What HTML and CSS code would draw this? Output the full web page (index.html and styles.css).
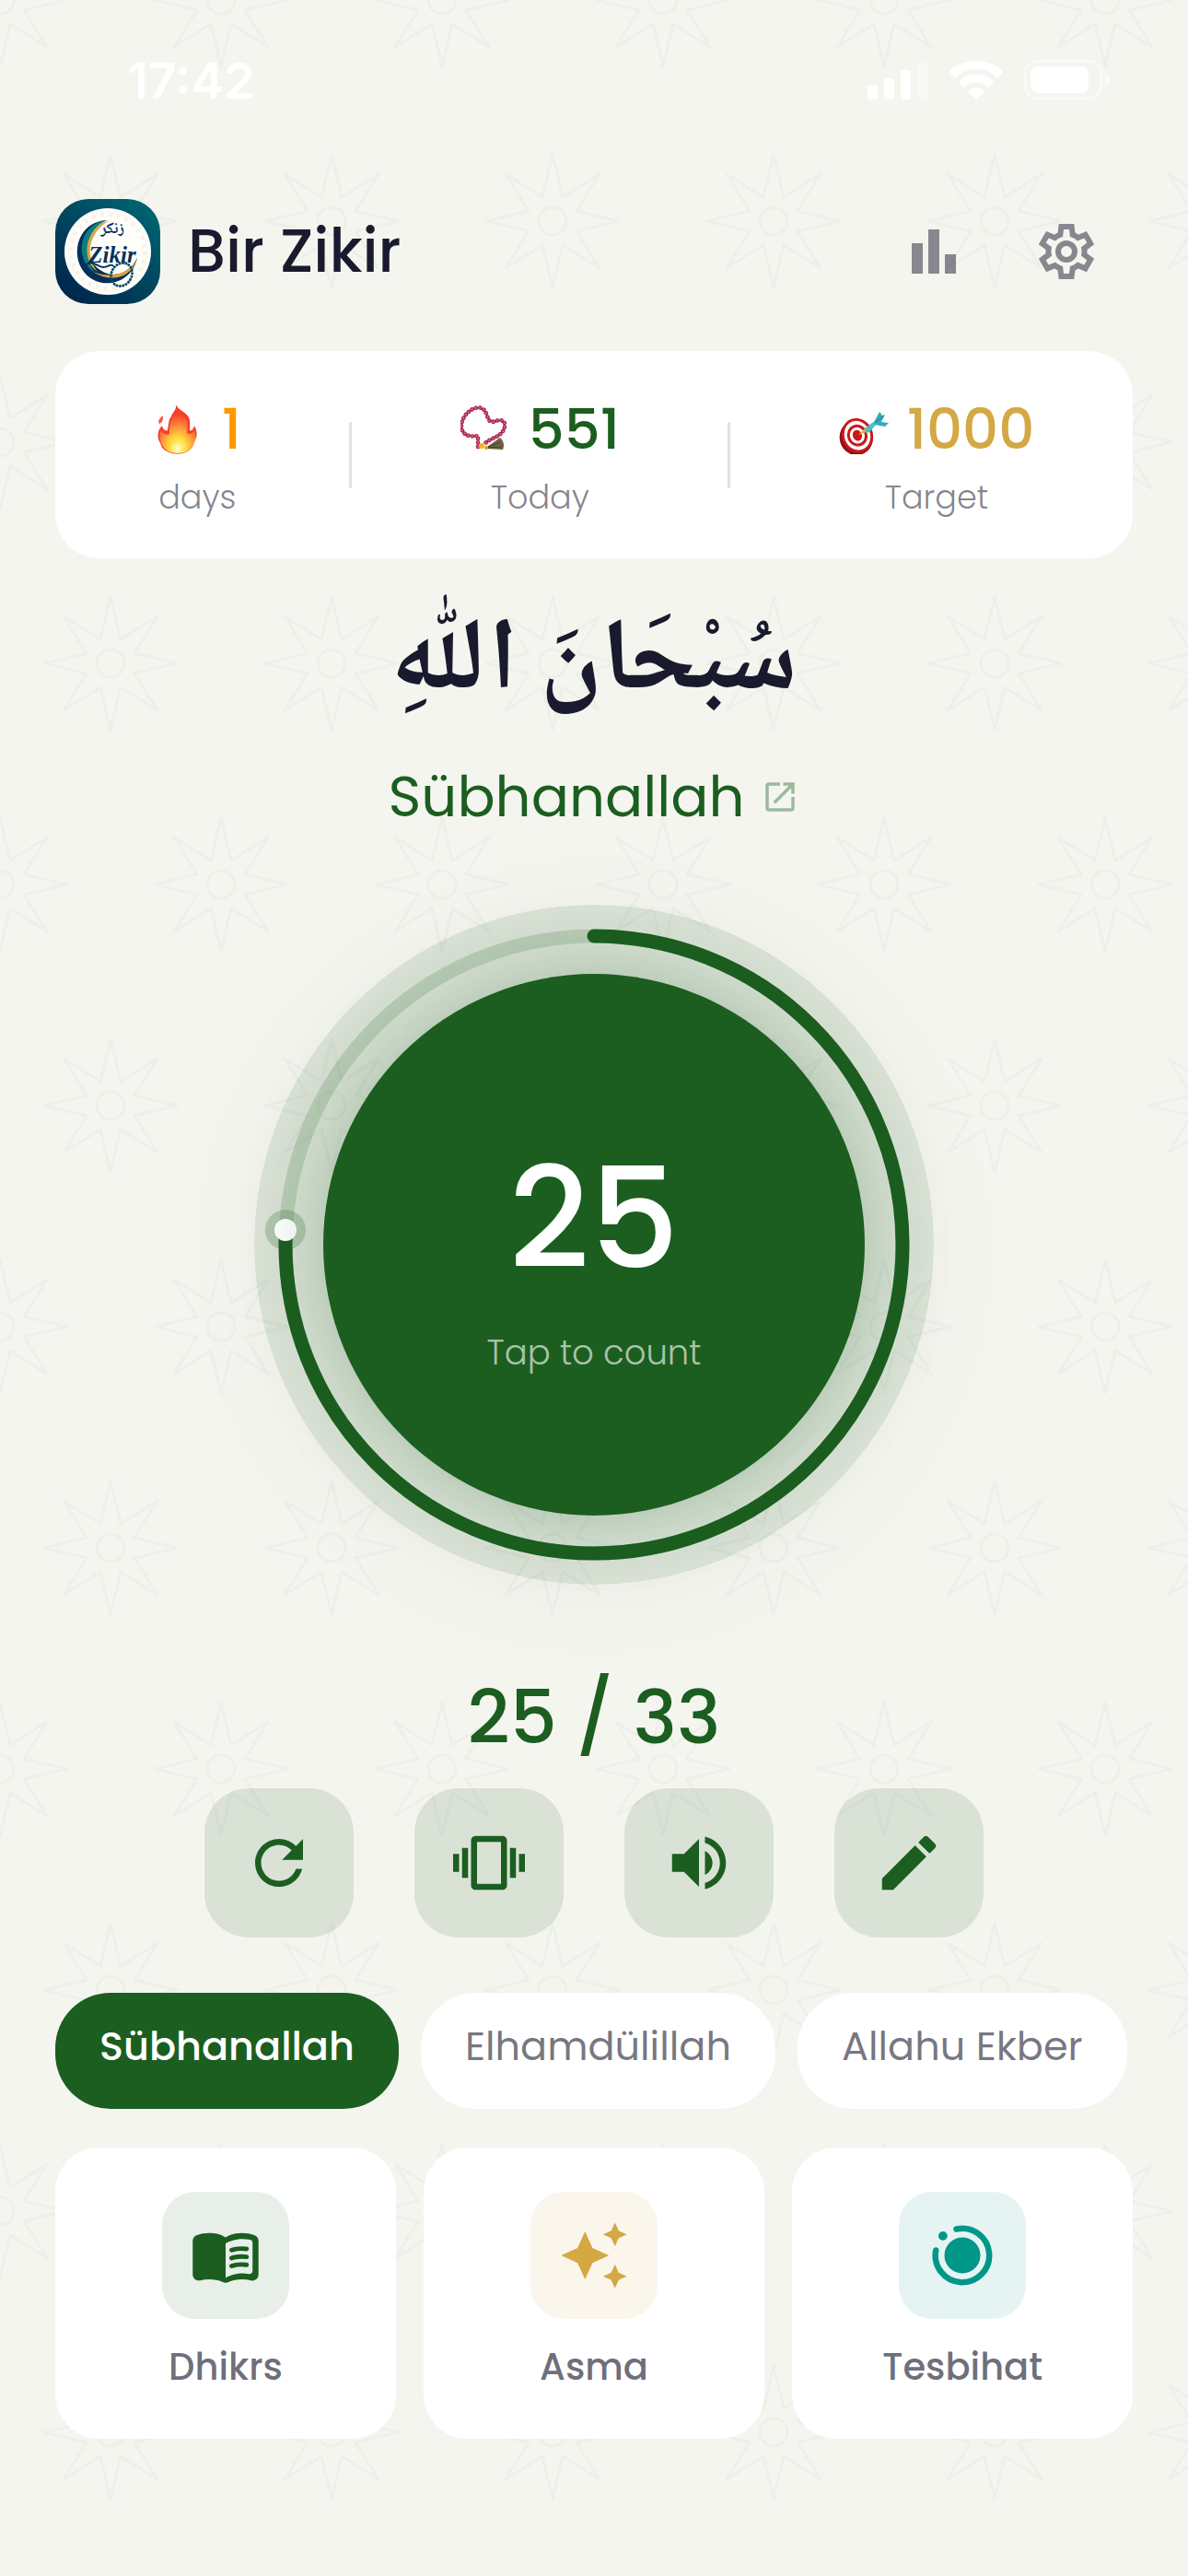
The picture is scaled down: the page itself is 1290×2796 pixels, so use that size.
FILE: index.html
```html
<!DOCTYPE html>
<html lang="en">
<head>
    <meta charset="UTF-8">
    <meta name="viewport" content="width=device-width, initial-scale=1.0">
    <title>Bir Zikir</title>
    <link rel="stylesheet" href="styles.css">
</head>
<body>
    <!-- Star pattern behind the page -->
    <svg class="pattern" aria-hidden="true">
        <defs>
            <g id="star">
                <path d="M0-72 11-26 51-51 26-11 72 0 26 11 51 51 11 26 0 72-11 26-51 51-26 11-72 0-26-11-51-51-11-26Z"/>
                <circle r="15"/>
            </g>
            <pattern id="stars" width="240" height="480" patternUnits="userSpaceOnUse">
                <g class="stars">
                    <use href="#star"/>
                    <use href="#star" x="240"/>
                    <use href="#star" y="480"/>
                    <use href="#star" x="240" y="480"/>
                    <use href="#star" x="120" y="240"/>
                </g>
            </pattern>
        </defs>
        <rect width="100%" height="100%" fill="url(#stars)"/>
    </svg>

    <div class="status-bar">
        <span class="time">17:42</span>
        <div class="status-icons">
            <svg width="66" height="44" viewBox="0 0 66 44">
                <rect x="0" y="27" width="11" height="16" rx="3"/>
                <rect x="18" y="20" width="11" height="23" rx="3"/>
                <rect x="36" y="11" width="11" height="32" rx="3"/>
                <rect x="54" y="2" width="11" height="41" rx="3" opacity=".3"/>
            </svg>
            <svg width="58" height="44" viewBox="0 0 58 44">
                <path d="M29 1C18 1 8 5 .5 12q-.8 1 0 2l4.700 4.700q1 .8 2 0C13 13 20.500 10 29 10s16 3 21.800 8.700q1 .8 2 0L57.500 14q.8-1 0-2C50 5 40 1 29 1Z"/>
                <path d="M29 15.500c-7 0-13.500 2.700-18.400 7.300q-.8 1 0 2l4.500 4.300q1 .8 2 0C20.300 26 24.400 24.300 29 24.300s8.700 1.700 11.900 4.800q1 .8 2 0l4.500-4.300q.8-1 0-2C42.500 18.200 36 15.500 29 15.500Z"/>
                <path d="M29 30c-3 0-5.900 1.100-8.200 3q-.8 1 0 2l7.200 7.300q1 1 2 0l7.200-7.300q.8-1 0-2C34.900 31.100 32 30 29 30Z"/>
            </svg>
            <svg width="94" height="44" viewBox="0 0 94 44">
                <rect x="1.500" y="1.500" width="82" height="40" rx="13" fill="none" stroke="#fff" stroke-width="3" opacity=".4"/>
                <rect x="7" y="7" width="63" height="29" rx="8"/>
                <path d="M88 15c7 2 7 12 0 14Z" opacity=".5"/>
            </svg>
        </div>
    </div>

    <main class="app">
        <header class="header">
            <svg class="logo" viewBox="0 0 114 114" role="img" aria-label="Zikir">
                <defs>
                    <linearGradient id="logo-bg" x1="0" y1="1" x2=".8" y2="0">
                        <stop offset="0" stop-color="#001f48"/>
                        <stop offset="1" stop-color="#006470"/>
                    </linearGradient>
                </defs>
                <rect width="114" height="114" rx="36" fill="url(#logo-bg)"/>
                <circle cx="57" cy="57" r="47" fill="#fffefb"/>
                <g fill="none" stroke="#f6f3ea">
                    <circle cx="57" cy="57" r="43"/>
                    <circle cx="57" cy="57" r="40" stroke-width="4" stroke-dasharray="4 5"/>
                </g>
                <path d="M56 23C18 25 13 76 44 89c18 7 40-2 45-25-8 16-24 22-37 15C29 68 32 31 56 23Z" fill="#03305a"/>
                <path d="M56 23C25 27 20 66 43 80 30 62 32 34 56 23Z" fill="#0b7f80"/>
                <path d="M59 23C30 31 28 68 46 79 33 63 34 38 59 23ZM89 64C81 81 62 87 41 79c18 12 42 8 48-15Z" fill="#d9a441"/>
                <text x="62" y="37" class="logo-arabic">زنكر</text>
                <text x="62" y="69" class="logo-latin">Zikir</text>
                <path d="M34 71c7-5 12 3 18 3s9-5 11-1M37 70q-4 1-4 2" fill="none" stroke="#063159" stroke-width="2"/>
                <ellipse cx="72" cy="82" rx="11" ry="13" transform="rotate(30 72 82)" fill="none" stroke="#0b4a62" stroke-width="3" stroke-linecap="round" stroke-dasharray=".1 3.300"/>
            </svg>
            <h1>Bir Zikir</h1>
            <button class="icon-button" aria-label="Statistics">
                <svg viewBox="0 0 24 24"><path d="M4 9h4v11H4zM16 13h4v7h-4zM10 4h4v16h-4z"/></svg>
            </button>
            <button class="icon-button" aria-label="Settings">
                <svg viewBox="0 -960 960 960">
                    <path fill-rule="evenodd" d="m370-80-16-128q-13-5-24.500-12T307-235l-119 50L78-375l103-78q-1-7-1-13.500v-27q0-6.500 1-13.500L78-585l110-190 119 50q11-8 23-15t24-12l16-128h220l16 128q13 5 24.500 12t22.500 15l119-50 110 190-103 78q1 7 1 13.500v27q0 6.500-2 13.500l103 78-110 190-118-50q-11 8-23 15t-24 12L590-80H370Zm70-80h79l14-106q31-8 57.500-23.500T639-327l99 41 39-68-86-65q5-14 7-29.500t2-31.500q0-16-2-31.500t-7-29.500l86-65-39-68-99 42q-22-23-48.500-38.500T533-694l-13-106h-79l-14 106q-31 8-57.500 23.500T321-633l-99-41-39 68 86 64q-5 15-7 30t-2 32q0 16 2 31t7 30l-86 65 39 68 99-42q22 23 48.500 38.500T427-266l13 106Z"/>
                    <circle cx="480" cy="-480" r="120" fill="none" stroke="currentColor" stroke-width="80"/>
                </svg>
            </button>
        </header>

        <section class="stats">
            <div class="stat">
                <div class="stat-value streak">
                    <svg viewBox="0 0 54 54">
                        <defs>
                            <radialGradient id="flame" cx=".5" cy=".9" r=".75">
                                <stop offset="0" stop-color="#fffbd0"/>
                                <stop offset=".3" stop-color="#ffdf3e"/>
                                <stop offset=".6" stop-color="#ff9a3c"/>
                                <stop offset="1" stop-color="#f5402c"/>
                            </radialGradient>
                        </defs>
                        <path d="M24 0c1 6-4 9-5 13-3 3-3 9-4 15-3 1-5-1-6-5C4 28 3 35 7 42l2 5c9 9 26 9 33-1l2-6c4-6 3-12 0-17-1 4-3 6-5 5 0-5 1-10-1-14C35 8 26 6 24 0Z" fill="#f5402c"/>
                        <path d="M24 3c1 6-4 9-4 13-3 4-3 11-3 16-4 2-8-1-9-4-4 10 1 25 18 25s22-15 18-25c-2 4-6 5-8 3 1-6 1-12-1-16-4-5-11-7-11-12Z" fill="url(#flame)"/>
                        <path d="M10 12c-4 3-6 6-4 9 4-2 4-5 4-9Z" fill="#f4573e"/>
                    </svg>
                    <span>1</span>
                </div>
                <div class="stat-label">days</div>
            </div>
            <div class="divider"></div>
            <div class="stat">
                <div class="stat-value today">
                    <svg viewBox="0 0 54 54">
                        <g fill="none" stroke-linecap="round">
                            <path d="M19 46V34C8 36 1 32 1 23 2 10 15 1 23 4c7 3 5 15 12 15 8-3 14-3 13 5-2 12-17 12-23 20" stroke="#9c2146" stroke-width="4.600" stroke-dasharray=".1 4.400"/>
                            <path d="M19 46V34C8 36 1 32 1 23 2 10 15 1 23 4c7 3 5 15 12 15 8-3 14-3 13 5-2 12-17 12-23 20" stroke="#e0567c" stroke-width="2.600" stroke-dasharray=".1 4.400"/>
                        </g>
                        <path d="m29 46 14-10c4 4 5 8 3 13l-17-1Z" fill="#6f6140"/>
                        <path d="m30 46 13-5m-13 6 15-1" stroke="#4a4029"/>
                        <circle cx="23" cy="45" r="3" fill="#f3b51d"/>
                        <circle cx="28" cy="47" r="2" fill="#e79a24"/>
                    </svg>
                    <span>551</span>
                </div>
                <div class="stat-label">Today</div>
            </div>
            <div class="divider"></div>
            <div class="stat">
                <div class="stat-value target">
                    <svg viewBox="0 0 54 54">
                        <g transform="rotate(-20 19 34)">
                            <ellipse cx="18" cy="36" rx="18" ry="19" fill="#8d1218"/>
                            <ellipse cx="20" cy="34" rx="17" ry="19" fill="#cc161c"/>
                            <ellipse cx="20" cy="34" rx="14" ry="16" fill="#fff"/>
                            <ellipse cx="20" cy="34" rx="11" ry="12" fill="#cc161c"/>
                            <ellipse cx="20" cy="34" rx="8" ry="9" fill="#fff"/>
                            <ellipse cx="20" cy="34" rx="5" ry="6" fill="#cc161c"/>
                        </g>
                        <path d="m21 33 8-8 3 4Z" fill="#e9b31c"/>
                        <path d="m28 26 12-9 2 3-9 10-4 1Z" fill="#45c3cf"/>
                        <path d="m38 19 6-11 3 4 3-1-4 8 8 1-4 4-11-2Z" fill="#36abb8"/>
                        <path d="m40 19 9-7" stroke="#1d7c88"/>
                    </svg>
                    <span>1000</span>
                </div>
                <div class="stat-label">Target</div>
            </div>
        </section>

        <section class="dhikr">
            <p class="arabic" lang="ar" dir="rtl">سُبْحَانَ اللّٰهِ</p>
            <a class="dhikr-name" href="#">
                Sübhanallah
                <svg viewBox="0 0 24 24"><path d="M19 19H5V5h7V3H5c-1.110 0-2 .9-2 2v14c0 1.100.890 2 2 2h14c1.100 0 2-.9 2-2v-7h-2v7zM14 3v2h3.590l-9.830 9.830 1.410 1.410L19 6.410V10h2V3h-7z"/></svg>
            </a>
        </section>

        <section class="dial">
            <svg class="ring" viewBox="0 0 738 738" aria-hidden="true">
                <circle cx="369" cy="369" r="369" fill="#1b5e20" opacity=".12"/>
                <circle class="track" cx="369" cy="369" r="335"/>
                <!-- 25 of 33 -->
                <circle class="progress" cx="369" cy="369" r="335" pathLength="33" stroke-dasharray="25 33" transform="rotate(-90 369 369)"/>
                <circle cx="34" cy="353" r="22" fill="#1b5e20" opacity=".22"/>
                <circle cx="34" cy="353" r="12" fill="#fff"/>
            </svg>
            <button class="counter">
                <span class="count">25</span>
                <span class="hint">Tap to count</span>
            </button>
        </section>

        <p class="total">25 / 33</p>

        <div class="tools">
            <button aria-label="Reset">
                <svg viewBox="0 0 24 24"><path d="M17.650 6.350C16.200 4.900 14.210 4 12 4c-4.420 0-7.990 3.580-7.990 8s3.570 8 7.990 8c3.730 0 6.840-2.550 7.730-6h-2.080c-.82 2.330-3.040 4-5.650 4-3.310 0-6-2.690-6-6s2.690-6 6-6c1.660 0 3.140.690 4.220 1.780L13 11h7V4l-2.350 2.350z"/></svg>
            </button>
            <button aria-label="Vibration">
                <svg viewBox="0 0 24 24"><path d="M0 15h2V9H0v6zm3 2h2V7H3v10zm19-8v6h2V9h-2zm-3 8h2V7h-2v10zM16.500 3h-9C6.670 3 6 3.670 6 4.500v15c0 .83.670 1.500 1.500 1.500h9c.83 0 1.500-.67 1.500-1.500v-15c0-.83-.67-1.500-1.500-1.500zM16 19H8V5h8v14z"/></svg>
            </button>
            <button aria-label="Sound">
                <svg viewBox="0 0 24 24"><path d="M3 9v6h4l5 5V4L7 9H3zm13.500 3c0-1.770-1.020-3.290-2.500-4.030v8.050c1.480-.73 2.500-2.250 2.500-4.020zM14 3.230v2.060c2.890.860 5 3.540 5 6.710s-2.110 5.850-5 6.710v2.060c4.010-.91 7-4.490 7-8.770s-2.990-7.860-7-8.770z"/></svg>
            </button>
            <button aria-label="Edit">
                <svg viewBox="0 0 24 24"><path d="M3 17.250V21h3.750L17.810 9.940l-3.750-3.750L3 17.250zM20.710 7.040c.39-.39.39-1.020 0-1.410l-2.340-2.340c-.39-.39-1.020-.39-1.410 0l-1.830 1.830 3.750 3.750 1.830-1.830z"/></svg>
            </button>
        </div>

        <div class="chips">
            <button class="chip active">Sübhanallah</button>
            <button class="chip">Elhamdülillah</button>
            <button class="chip">Allahu Ekber</button>
        </div>

        <nav class="cards">
            <a class="card" href="#">
                <span class="card-icon green">
                    <svg viewBox="0 0 24 24">
                        <path d="M17.500 4.500c-1.950 0-4.050.4-5.500 1.500-1.450-1.100-3.550-1.500-5.500-1.500-1.450 0-2.990.22-4.280.79C1.490 5.620 1 6.330 1 7.140v11.280c0 1.300 1.220 2.260 2.480 1.940.98-.25 2.020-.36 3.020-.36 1.560 0 3.220.26 4.560.92.6.3 1.280.3 1.870 0 1.340-.67 3-.92 4.560-.92 1 0 2.040.11 3.020.36 1.260.33 2.480-.63 2.480-1.940V7.140c0-.81-.49-1.520-1.220-1.850-1.280-.57-2.820-.79-4.270-.79zM21 17.230c0 .63-.58 1.090-1.200.98-.75-.14-1.530-.2-2.300-.2-1.700 0-4.150.65-5.500 1.500V8c1.350-.85 3.800-1.500 5.500-1.500.92 0 1.830.09 2.700.28.46.1.8.51.8.98v9.470z"/>
                        <path d="M14 10.250c1.500-.5 3.300-.6 5-.4M14 12.900c1.500-.5 3.300-.6 5-.4M14 15.550c1.500-.5 3.300-.6 5-.4" fill="none" stroke="currentColor" stroke-width="1.500" stroke-linecap="round"/>
                    </svg>
                </span>
                Dhikrs
            </a>
            <a class="card" href="#">
                <span class="card-icon gold">
                    <svg viewBox="0 0 24 24"><path d="M19 9l1.250-2.750L23 5l-2.750-1.250L19 1l-1.250 2.750L15 5l2.750 1.250L19 9zm-7.500.5L9 4 6.500 9.500 1 12l5.500 2.500L9 20l2.500-5.500L17 12l-5.500-2.500zM19 15l-1.250 2.750L15 19l2.750 1.250L19 23l1.250-2.750L23 19l-2.750-1.250L19 15z"/></svg>
                </span>
                Asma
            </a>
            <a class="card" href="#">
                <span class="card-icon teal">
                    <svg viewBox="0 0 24 24">
                        <circle cx="12" cy="12" r="6"/>
                        <circle cx="5.500" cy="5.500" r="1.500"/>
                        <path d="M10 3.220A9 9 0 1 1 3.150 10.300" fill="none" stroke="currentColor" stroke-width="2" stroke-linecap="round"/>
                    </svg>
                </span>
                Tesbihat
            </a>
        </nav>
    </main>
</body>
</html>
```
FILE: styles.css
```css
* {
    box-sizing: border-box;
}

body {
    position: relative;
    margin: 0;
    min-height: 100vh;
    background-color: #f5f5f0;
    font-family: Poppins, Inter, sans-serif;
    color: #1a1a2e;
}

h1,
p {
    margin: 0;
}

button {
    border: none;
    padding: 0;
    font-family: inherit;
    cursor: pointer;
}

a {
    color: inherit;
    text-decoration: none;
}

svg {
    display: block;
    flex: none;
    fill: currentColor;
}

.pattern {
    position: absolute;
    top: 0;
    left: 0;
    width: 100%;
    height: 100%;
    z-index: -1;
}

.stars {
    fill: none;
    stroke: #1b5e20;
    stroke-width: 3;
    stroke-linejoin: round;
    opacity: 0.04;
}

/* Status bar */
.status-bar {
    display: flex;
    justify-content: space-between;
    padding: 54px 84px 0 138px;
    height: 201px;
    color: #fff;
}

.time {
    font-family: Inter, sans-serif;
    font-size: 54px;
    font-weight: 600;
    line-height: 68px;
}

.status-icons {
    display: flex;
    gap: 23px;
    padding-top: 11px;
}

.app {
    display: flex;
    flex-direction: column;
    padding: 0 60px 150px;
}

/* Header */
.header {
    display: flex;
    align-items: center;
    height: 144px;
    margin-bottom: 36px;
}

.logo {
    width: 114px;
    height: 114px;
}

.logo-arabic,
.logo-latin {
    fill: #063159;
    text-anchor: middle;
}

.logo-arabic {
    font: bold 17px "Noto Naskh Arabic", Amiri, "DejaVu Sans", sans-serif;
}

.logo-latin {
    font: italic bold 25px "Liberation Serif", serif;
}

.header h1 {
    flex: 1;
    margin-left: 30px;
    font-size: 65px;
    font-weight: 500;
}

.icon-button {
    display: grid;
    place-items: center;
    width: 144px;
    height: 144px;
    background: none;
    color: rgba(26, 26, 46, 0.5);
}

.icon-button svg {
    width: 72px;
    height: 72px;
}

/* Stats */
.stats {
    display: flex;
    justify-content: space-around;
    align-items: center;
    height: 225px;
    padding: 0 48px;
    background-color: #fff;
    border-radius: 48px;
}

.stat {
    display: flex;
    flex-direction: column;
    align-items: center;
    gap: 14px;
    padding-top: 6px;
}

.stat-value {
    display: flex;
    align-items: center;
    gap: 20px;
    font-size: 61px;
    font-weight: 500;
    line-height: 72px;
}

.stat-value svg {
    width: 54px;
    height: 54px;
}

.streak {
    color: #ff9800;
}

.today {
    color: #1b5e20;
}

.target {
    color: #d4a843;
}

.stat-label {
    font-size: 35px;
    font-weight: 300;
    line-height: 48px;
    color: rgba(26, 26, 46, 0.55);
}

.divider {
    width: 3px;
    height: 72px;
    background-color: #e2e2e2;
}

/* Current dhikr */
.dhikr {
    display: flex;
    flex-direction: column;
    align-items: center;
    margin-bottom: 72px;
}

.arabic {
    padding-top: 20px;
    font-family: "Geeza Pro", "Noto Naskh Arabic", Amiri, "DejaVu Sans", sans-serif;
    font-size: 110px;
    font-weight: bold;
    line-height: 194px;
}

.dhikr-name {
    display: flex;
    align-items: center;
    gap: 18px;
    font-size: 61px;
    line-height: 90px;
    color: #1b5e20;
}

.dhikr-name svg {
    width: 42px;
    height: 42px;
    opacity: 0.4;
}

/* Counter */
.dial {
    display: grid;
    place-items: center;
    margin-bottom: 84px;
}

.ring,
.counter {
    grid-area: 1 / 1;
    border-radius: 50%;
}

.ring {
    width: 738px;
    height: 738px;
    box-shadow: 0 12px 120px rgba(0, 0, 0, 0.03);
    position: relative;
    z-index: 1;
    pointer-events: none;
}

.track,
.progress {
    fill: none;
    stroke: #1b5e20;
    stroke-width: 15;
}

.track {
    opacity: 0.17;
}

.progress {
    stroke-linecap: round;
}

.counter {
    display: flex;
    flex-direction: column;
    align-items: center;
    justify-content: center;
    gap: 40px;
    width: 588px;
    height: 588px;
    padding-top: 38px;
    background-color: #1b5e20;
    color: #fff;
    box-shadow: 0 0 90px rgba(27, 94, 32, 0.3);
    z-index: 2;
}

.count {
    font-size: 152px;
    font-weight: 500;
    line-height: 156px;
}

.hint {
    font-size: 37px;
    line-height: 54px;
    font-weight: 300;
    color: rgba(255, 255, 255, 0.65);
}

.total {
    margin-bottom: 16px;
    font-size: 80px;
    font-weight: 500;
    line-height: 121px;
    text-align: center;
    color: #1b5e20;
}

.tools {
    display: flex;
    justify-content: center;
    gap: 66px;
    margin-bottom: 60px;
}

.tools button {
    display: grid;
    place-items: center;
    width: 162px;
    height: 162px;
    border-radius: 48px;
    background-color: rgba(27, 94, 32, 0.12);
    color: #1b5e20;
}

.tools svg,
.card-icon svg {
    width: 78px;
    height: 78px;
}

/* Dhikr chips */
.chips {
    display: flex;
    gap: 24px;
    margin-bottom: 42px;
}

.chip {
    height: 126px;
    padding: 0 48px 10px;
    border-radius: 60px;
    background-color: #fff;
    color: rgba(26, 26, 46, 0.6);
    font-size: 43px;
    white-space: nowrap;
}

.chip.active {
    background-color: #1b5e20;
    color: #fff;
    font-weight: 500;
}

/* Bottom cards */
.cards {
    display: grid;
    grid-template-columns: repeat(3, 1fr);
    gap: 30px;
}

.card {
    display: flex;
    flex-direction: column;
    align-items: center;
    gap: 22px;
    padding: 48px 0;
    border-radius: 48px;
    background-color: #fff;
    color: rgba(26, 26, 46, 0.65);
    font-size: 40px;
    font-weight: 500;
    line-height: 60px;
}

.card-icon {
    display: grid;
    place-items: center;
    width: 138px;
    height: 138px;
    border-radius: 36px;
}

.green {
    background-color: #e8efe9;
    color: #1b5e20;
}

.gold {
    background-color: #fbf6ec;
    color: #d4a843;
}

.teal {
    background-color: #e5f4f3;
    color: #009688;
}
```
